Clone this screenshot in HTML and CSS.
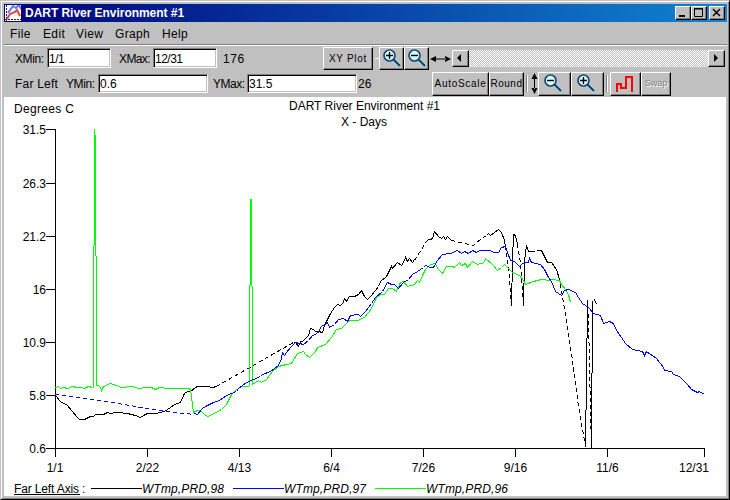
FILE: index.html
```html
<!DOCTYPE html>
<html lang="en">
<head>
<meta charset="utf-8">
<title>DART River Environment #1</title>
<link rel="stylesheet" href="styles.css">
</head>
<body>
<svg class="defs" width="0" height="0">
  <symbol id="lens" viewBox="0 0 20 20">
    <path d="M11 10L18 17" stroke="#b8f0f4" stroke-width="3.600"/>
    <path d="M11.500 10.500L18 17" stroke="#16466f" stroke-width="2.400"/>
    <circle cx="7.500" cy="6.500" r="5.500" fill="#d8fcfc" stroke="#174873" stroke-width="1.700"/>
  </symbol>
</svg>
<div class="window">
  <header class="titlebar">
    <svg class="app-icon" width="16" height="16" viewBox="0 0 16 16">
      <rect width="16" height="16" fill="#fff"/>
      <path d="M1.5 0V16M0 14.5H16" stroke="#223" stroke-dasharray="2 1"/>
      <path d="M3 8L8 1L11 3L14 0L16 4" fill="none" stroke="#5577ff" stroke-width="2"/>
      <path d="M2 14L5 9L10 7L12 5L15 11" fill="none" stroke="#ef4040" stroke-width="2"/>
    </svg>
    <h1>DART River Environment #1</h1>
    <div class="controls">
      <span class="bevel"><svg width="13" height="11"><path d="M3 9H9" stroke="#000" stroke-width="2"/></svg></span>
      <span class="bevel"><svg width="13" height="11"><path d="M2.5 1.5H10.5V9.5H2.5Z M2 2H11" fill="none" stroke="#000"/></svg></span>
      <span class="bevel close"><svg width="13" height="11"><path d="M3 2L10 9M10 2L3 9" stroke="#000" stroke-width="1.5"/></svg></span>
    </div>
  </header>
  <nav class="menu"><span class="m-file">File</span><span class="m-edit">Edit</span><span class="m-view">View</span><span class="m-graph">Graph</span><span>Help</span></nav>
  <div class="bar bar-x">
    <label class="l-xmin">XMin:</label><div class="field short">1/1</div>
    <label class="l-xmax">XMax:</label><div class="field short">12/31</div>
    <span class="count">176</span>
    <div class="btn b-plot">XY Plot</div>
    <span class="dash"></span>
    <div class="btn b-zoom"><svg width="20" height="20"><use href="#lens"/><path d="M4 6.500H11M7.500 3V10" stroke="#000" stroke-width="1.400"/></svg></div>
    <div class="btn b-zoom"><svg width="20" height="20"><use href="#lens"/><path d="M4 6.500H11" stroke="#000" stroke-width="1.400"/></svg></div>
    <svg class="harrow" width="22" height="8"><path d="M0 4L6 1V7ZM21 4L15 1V7ZM5 3.5H16V4.5H5Z"/></svg>
    <div class="scroll">
      <span class="bevel"><svg width="14" height="15"><path d="M8 3V11L4 7Z"/></svg></span>
      <span class="track"></span>
      <span class="bevel"><svg width="14" height="15"><path d="M5 3V11L9 7Z"/></svg></span>
    </div>
  </div>
  <div class="bar bar-y">
    <label class="l-far">Far Left</label><label class="l-ymin">YMin:</label><div class="field long">0.6</div>
    <label class="l-ymax">YMax:</label><div class="field long">31.5</div>
    <span class="count2">26</span>
    <div class="btn b-auto">AutoScale</div>
    <div class="btn b-round">Round</div>
    <span class="sep"></span>
    <svg class="varrow" width="7" height="22"><path d="M3.5 0L6.5 6H.5ZM3.5 21L6.5 15H.5ZM3 5H4V16H3Z"/></svg>
    <div class="btn b-wide"><svg width="20" height="20"><use href="#lens"/><path d="M4 6.500H11" stroke="#000" stroke-width="1.400"/></svg></div>
    <div class="btn b-wide"><svg width="20" height="20"><use href="#lens"/><path d="M4 6.500H11M7.500 3V10" stroke="#000" stroke-width="1.400"/></svg></div>
    <span class="sep sep2"></span>
    <div class="btn b-step"><svg width="18" height="18"><path d="M1 17V9H5V13H10V2H16V17" fill="none" stroke="#f00" stroke-width="2"/></svg></div>
    <div class="btn b-swap">Swap</div>
  </div>
  <main class="plot">
    <svg width="722" height="399" viewBox="4 97 722 399">
      <g class="label">
        <text x="14" y="113" textLength="60">Degrees C</text>
        <text x="289" y="110" textLength="151">DART River Environment #1</text>
        <text x="341" y="126" textLength="46">X - Days</text>
      </g>
      <g class="label ylab">
        <text x="46" y="134">31.5</text><text x="46" y="188">26.3</text><text x="46" y="241">21.2</text><text x="46" y="294">16</text><text x="46" y="347">10.9</text><text x="46" y="400">5.8</text><text x="46" y="453">0.6</text>
      </g>
      <g class="label xlab">
        <text x="55" y="472">1/1</text><text x="147.500" y="472">2/22</text><text x="239.500" y="472">4/13</text><text x="331.500" y="472">6/4</text><text x="423.500" y="472">7/26</text><text x="515.500" y="472">9/16</text><text x="607.500" y="472">11/6</text><text x="694" y="472">12/31</text>
      </g>
      <g class="line">
        <path class="black" d="M55.500 129V457M46 448.500H705M46 129.500H56M46 183.500H56M46 236.500H56M46 289.500H56M46 342.500H56M46 395.500H56M147.500 448V457M239.500 448V457M331.500 448V457M423.500 448V457M515.500 448V457M607.500 448V457M704.500 448V457"/>
        <g transform="translate(.5 .5)">
        <path class="black" d="M55 395L60 401L63 403L66 404L72 411L76 416L79 419H84L90 416H93L95 414H103L107 412L110 413L115 412H122L123 413H127L131 414L135 415L140 417L145 414L147 413H155L164 411L170 407L174 404L180 402L184 393L187 391H190L195 387L197 386H207L212 387L216 386M293 342H295L298 346L300 341H302L308 335L310 328L313 329L315 331H318L322 332L324 325L330 313L334 307L337 304L340 305L343 302L344 298L346 301L349 296H354L358 294L361 290L362 292L364 296L367 299L371 295L378 286L380 281L386 276L391 266L392 268L397 262L401 265L403 262L405 257L407 261L409 258L412 262L414 259M426 241L428 239H430L432 238L434 231L438 236L441 238L443 236L445 239L447 236L451 240M486 235L488 233L490 235L498 229L501 232L504 240L505 246M511 306L512 260L513 234L515 235L517 244M523 306L524 260L526 245L528 251H530M541 250L544 256L547 262H551L556 269L559 279L560 284M585 446V410L586 409V338L587 337V300M591 448V373L592 372V300M594 299L596 304"/>
        <path class="black dashed" d="M216 386L293 342M414 260L426 241M451 240L473 245L476 242L486 235M505 246L508 267L511 307M517 244L520 262L523 306M530 251L541 250M560 284L566 320L572 360L578 406L585 446M587 300L588 320L590 408L591 448"/>
        <path class="green" d="M55 387L58 386L60 388L63 387L67 388L72 386L76 387H81L84 388L88 386L92 387M93 387V250L94 240V129M94 129L95 140V250L96 260V385L98 385L100 387L101 390L103 386L110 383L116 385L121 387L132 386L138 388L146 387H151L155 389L159 387L168 388H188L190 389L193 412L197 410L201 411L204 414L207 416L214 413L221 409L226 404L231 394L235 390L238 388L241 386H248L249 385V290L250 280V199H251V280L252 290V384L258 380L261 382L266 379L272 371L278 366L286 364L291 363L297 353L303 351L305 354L309 357L315 351L317 347L325 344L331 337L336 329L341 328L345 324L349 320H357L364 317L371 308L376 297L380 294H384L388 288H392L396 291L400 282L403 281L407 286L414 284L417 280L419 282L422 275L425 269L430 264L435 263L437 268L442 273L446 266H452L454 267L459 262L461 265L465 263L467 267L472 261L477 264L484 262L485 258L492 264L497 270L501 267L504 264L509 269L512 272L519 275L523 280L525 284L533 281L541 279L549 280L552 279L559 280L561 284L565 289L568 294L570 302"/>
        <path class="blue dashed" d="M55 394L112 402L135 406L165 411L194 414"/>
        <path class="blue" d="M194 413L197 414L202 408L207 405L213 402L219 400L226 395L236 391L238 388L246 382L253 379L260 376L262 374L270 371L278 365L281 358L282 352L284 355L286 352L291 346L295 342L303 344L308 340L312 335L317 333L321 326L327 322L329 327L334 324L338 319L343 318L347 321L350 315L358 314L360 316L365 311L371 303L375 297L382 291L387 282L391 284H394L398 288L403 282L408 279L412 274L417 271L423 267L425 265L430 267H433L437 260L442 254L450 253L457 250L461 253L464 251L468 253L472 250L476 252L479 250H490L493 252H498L501 247L505 246L507 252L510 260L514 261L519 266L522 263L528 262L529 258L531 262L540 264L544 269L548 277L551 281L555 291L561 295L564 290L568 289L575 292L578 297L582 303L588 307L593 313L600 315L603 323L609 321L613 323L616 330L621 337L625 343L632 349L642 351L644 355L646 351L656 358L663 367L664 370L671 371L673 374L679 376L687 384L691 389L697 392L699 391L704 394"/>
        </g>
        <path class="black" d="M14 494.500H80M91 488.500H142"/>
        <path class="blue" d="M233 488.500H284"/>
        <path class="green" d="M375 488.500H426"/>
      </g>
      <g class="label">
        <text x="14" y="493" textLength="65">Far Left Axis</text><text x="82" y="493">:</text>
        <g class="series">
          <text x="142" y="493" textLength="82">WTmp,PRD,98</text><text x="284" y="493" textLength="82">WTmp,PRD,97</text><text x="426" y="493" textLength="82">WTmp,PRD,96</text>
        </g>
      </g>
    </svg>
  </main>
</div>
</body>
</html>
```
FILE: styles.css
```css
* { box-sizing: border-box; }
body { margin: 0; font: 12px/14px "Liberation Sans", Arial, sans-serif; color: #000; }
svg { display: block; flex: none; }
.defs { position: absolute; }
.window {
  width: 730px; height: 500px; padding: 3px 2px 2px 3px; overflow: hidden; background: #c0c0c0;
  border: 1px solid; border-color: #c0c0c0 #000 #000 #c0c0c0;
  box-shadow: inset 1px 1px #fff, inset -1px -1px #808080;
  display: flex; flex-direction: column;
}
.titlebar { flex: none; height: 18px; display: flex; align-items: center; padding: 0 2px 0 1px; background: linear-gradient(90deg, #00007b, #1084d0); color: #fff; }
.app-icon { margin-right: 4px; }
h1 { margin: 0; font-size: 12px; line-height: 18px; letter-spacing: -.04px; white-space: nowrap; }
.controls { display: flex; margin-left: auto; }
.bevel { display: block; background: #c0c0c0; border: 1px solid; border-color: #fff #000 #000 #fff; box-shadow: inset -1px -1px #808080; }
.controls .bevel { width: 16px; height: 14px; }
.controls .close { margin-left: 2px; }
.menu { flex: none; height: 24px; display: flex; padding: 5px 0 0 6px; letter-spacing: .35px; border-bottom: 1px solid #fff; box-shadow: inset 0 -1px #808080; }
.m-file, .m-edit { width: 33px; }
.m-view { width: 39px; }
.m-graph { width: 47px; }
.bar { flex: none; display: flex; align-items: flex-start; white-space: nowrap; }
.bar-x { height: 25px; padding: 1px 1px 0 11px; }
.bar-y { height: 26px; padding: 1px 0 0 11px; }
.bar > * { flex: none; }
.bar label, .count, .count2 { margin-top: 5px; }
.l-xmin { width: 32px; letter-spacing: -.4px; }
.l-xmax { width: 42px; padding-left: 8px; letter-spacing: -.6px; }
.count { width: 106px; padding-left: 6px; letter-spacing: .6px; }
.l-far { width: 51px; letter-spacing: .2px; }
.l-ymin { width: 32px; letter-spacing: -.4px; }
.l-ymax { width: 39px; padding-left: 5px; letter-spacing: -.5px; }
.count2 { width: 75px; padding-left: 1px; }
.field { height: 20px; margin-top: 1px; padding: 4px 0 0 1px; line-height: 12px; letter-spacing: -.5px; background: #fff; border: 1px solid; border-color: #808080 #fff #fff #808080; box-shadow: inset 1px 1px #000, inset -1px -1px #c0c0c0; }
.bar-y .field { margin-top: 2px; height: 19px; padding-top: 3px; letter-spacing: 0; }
.short { width: 64px; }
.long { width: 110px; }
.btn { display: flex; align-items: center; justify-content: center; background: #c0c0c0; border: 1px solid; border-color: #fff #000 #000 #fff; box-shadow: inset -1px -1px #808080; font-size: 10px; letter-spacing: .7px; }
.bar-x .btn { height: 23px; }
.bar-y .btn { height: 24px; }
.b-plot { width: 50px; }
.dash { width: 4px; height: 1px; margin: 11px 0 0 2px; background: #fff; }
.b-zoom { width: 25px; }
.harrow { margin-top: 8px; margin-left: 1px; }
.scroll { display: flex; width: 273px; height: 17px; margin-top: 3px; }
.scroll .bevel { flex: none; width: 17px; }
.track { flex: 1; background: repeating-conic-gradient(#fff 0 25%, #c0c0c0 0 50%) 0 0 / 2px 2px; }
.b-auto { width: 57px; }
.b-round { width: 35px; letter-spacing: .5px; }
.sep { width: 2px; height: 17px; margin: 3px 3px 0 2px; border-left: 1px solid #808080; background: #fff; }
.varrow { margin-top: 1px; }
.b-wide { width: 33px; padding-right: 3px; }
.sep2 { margin-right: 2px; }
.b-step { width: 31px; padding-right: 2px; }
.b-step svg { shape-rendering: crispEdges; }
.b-swap { width: 30px; padding-bottom: 3px; font-size: 9px; letter-spacing: 0; color: #808080; text-shadow: 1px 1px #fff; }
.plot { flex: none; width: 722px; height: 399px; background: #fff; }
.label { font-size: 12px; }
.ylab { text-anchor: end; }
.xlab { text-anchor: middle; }
.series { font-style: italic; }
.line { shape-rendering: crispEdges; fill: none; stroke-width: 1; }
.black { stroke: #000; }
.blue { stroke: #00f; }
.green { stroke: #0f0; }
.dashed { stroke-dasharray: 4 3; }
```
